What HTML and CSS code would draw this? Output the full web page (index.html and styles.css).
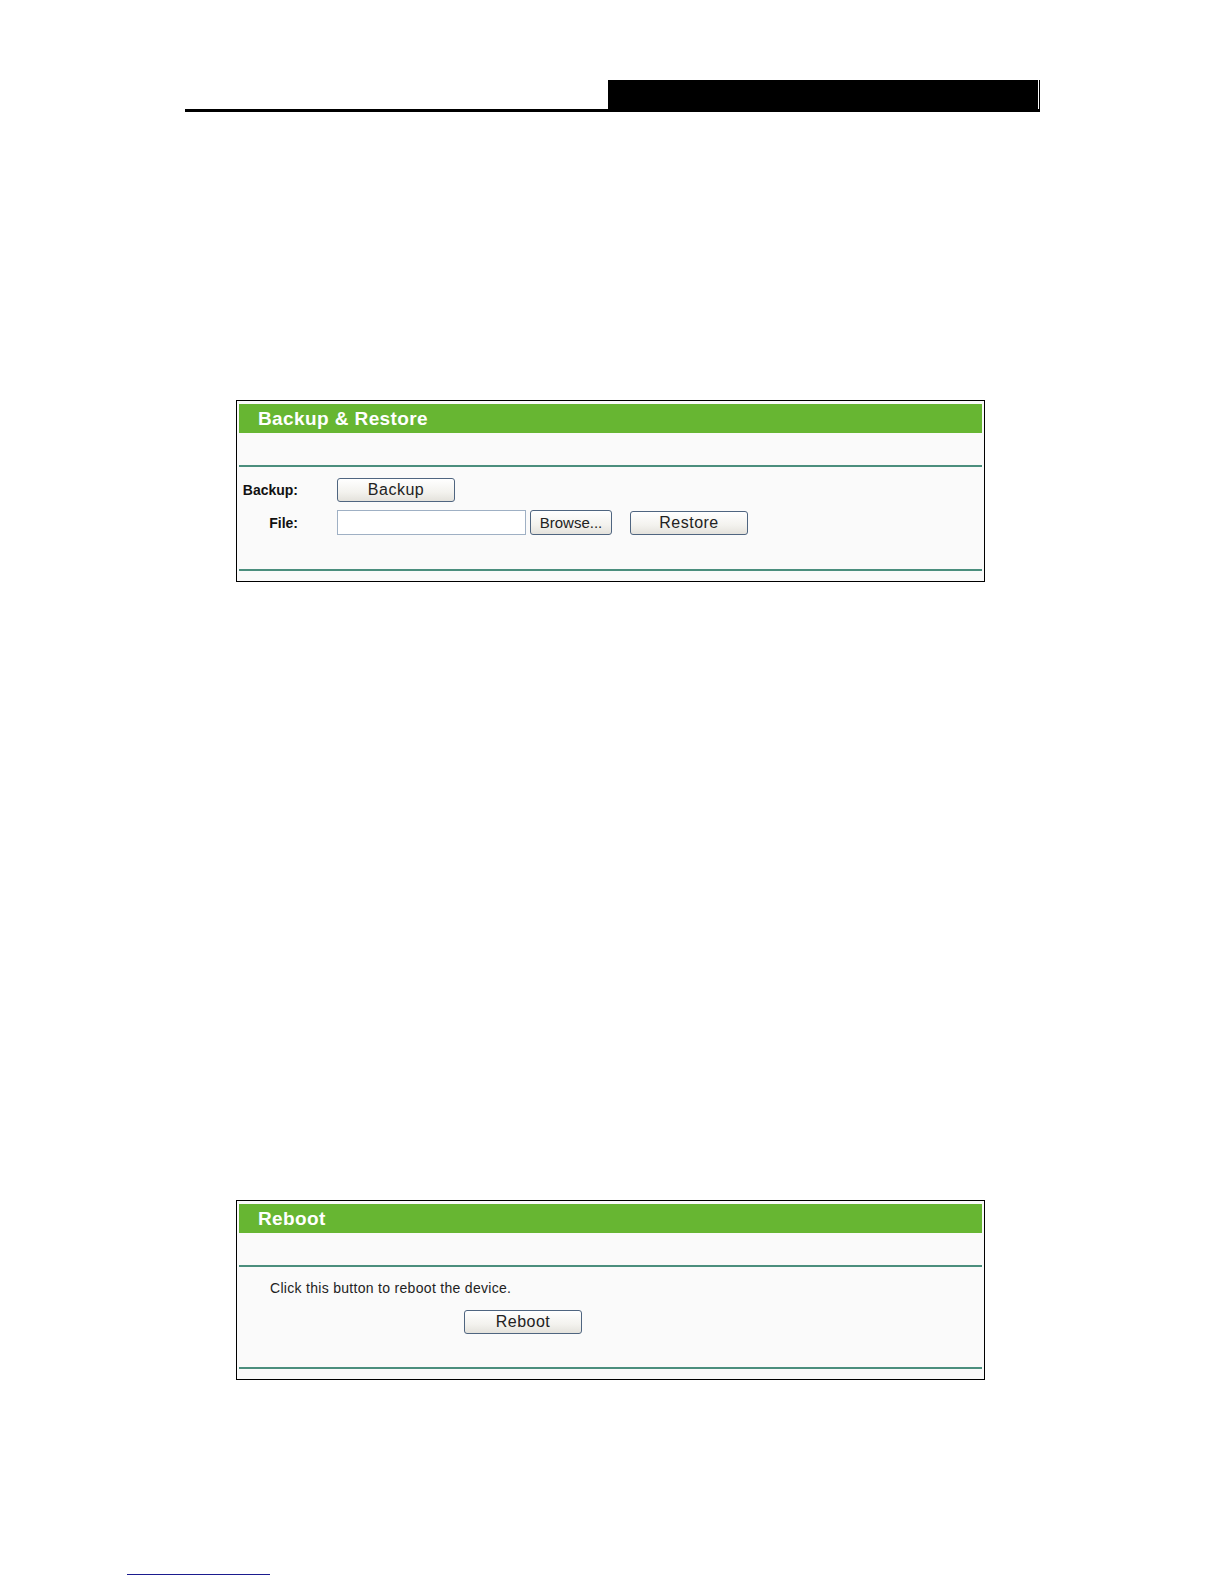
FILE: index.html
```html
<!DOCTYPE html>
<html>
<head>
<meta charset="utf-8">
<title>Backup &amp; Restore / Reboot</title>
<link rel="stylesheet" href="styles.css">
</head>
<body>
<div class="page">

   <div class="doc-head">
      <div class="head-bar"></div>
   </div>

   <div class="panel panel-backup">
      <div class="panel-title">Backup &amp; Restore</div>
      <div class="panel-gap"></div>
      <div class="rule"></div>
      <div class="panel-body backup-body">
         <div class="form-row">
            <span class="item">Backup:</span>
            <button type="button" class="btn">Backup</button>
         </div>
         <div class="form-row">
            <span class="item">File:</span>
            <input type="text" class="file-box">
            <button type="button" class="btn btn-browse">Browse...</button>
            <button type="button" class="btn btn-restore">Restore</button>
         </div>
      </div>
      <div class="rule"></div>
   </div>

   <div class="panel panel-reboot">
      <div class="panel-title">Reboot</div>
      <div class="panel-gap"></div>
      <div class="rule"></div>
      <div class="panel-body reboot-body">
         <p class="note">Click this button to reboot the device.</p>
         <button type="button" class="btn btn-reboot">Reboot</button>
      </div>
      <div class="rule"></div>
   </div>

   <div class="foot-rule"></div>

</div>
</body>
</html>
```

FILE: styles.css
```css
/* page frame */
   html, body   {margin: 0; padding: 0; background-color: white}
   body         {font-family: "Liberation Sans", Arial, Helvetica, sans-serif; color: #222}
   .page        {padding-top: 80px}

   .doc-head    {margin-left: 185px; width: 855px; height: 29px;
                 border-bottom: 3px solid #000;
                 display: flex; justify-content: flex-end}
   .head-bar    {width: 432px; background-color: #000;
                 box-shadow: inset -1px 0 0 #000, inset -2px 0 0 #fff}

/* router style panels */
   .panel       {box-sizing: border-box; width: 749px; margin-left: 236px;
                 border: 1px solid #000; padding: 3px 2px 10px;
                 background-color: #fafafa}
   .panel-backup {margin-top: 288px}
   .panel-reboot {margin-top: 618px}

   .panel-title {height: 29px; line-height: 29px; padding-left: 19px;
                 background-color: #67b632; color: #fff;
                 font-size: 19px; font-weight: bold; letter-spacing: 0.4px}
   .panel-gap   {height: 32px}
   .rule        {height: 2px; background-color: #4b8e7d}

   .backup-body {padding: 11px 0 34px}
   .form-row    {display: flex; align-items: center}
   .form-row + .form-row {margin-top: 8px}
   .item        {width: 59px; margin-right: 39px; text-align: right;
                 font-size: 14px; font-weight: bold; color: #111}

   .btn         {box-sizing: border-box; width: 118px; height: 24px; padding: 0;
                 border: 1px solid #4f6580; border-radius: 3px;
                 background: linear-gradient(#ffffff, #f3f2ee 60%, #e4e2dc);
                 font-family: "Liberation Sans", Arial, sans-serif;
                 font-size: 16px; letter-spacing: 0.5px; color: #222}
   .btn-browse  {width: 82px; height: 25px; margin-left: 4px; font-size: 15px; letter-spacing: 0}
   .btn-restore {margin-left: 18px}

   .file-box    {box-sizing: border-box; width: 189px; height: 25px; margin: 0;
                 border: 1px solid #9fb0c4; background-color: #fff}

   .reboot-body {padding: 13px 0 33px}
   .note        {margin: 0 0 14px 31px; font-size: 14px; line-height: 16px;
                 letter-spacing: 0.3px}
   .btn-reboot  {display: block; margin-left: 225px}

   .foot-rule   {width: 143px; height: 1px; margin: 194px 0 0 127px;
                 background-color: #1b1b8f}
```
